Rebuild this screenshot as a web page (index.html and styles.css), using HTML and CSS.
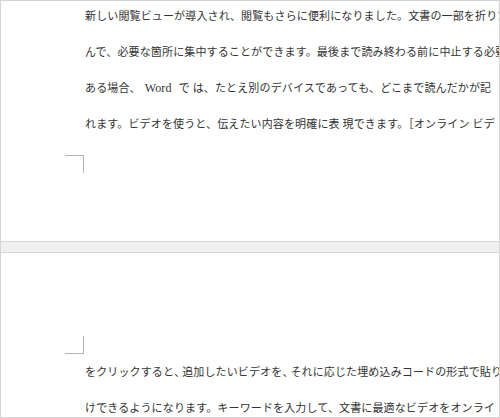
FILE: index.html
```html
<!DOCTYPE html>
<html lang="ja">
<head>
    <meta charset="UTF-8">
    <title>閲覧ビュー</title>
    <link rel="stylesheet" href="styles.css">
</head>
<body>
    <div class="viewer">
        <div class="page page--first">
            <div class="body-text">
                <p class="line">新しい閲覧ビューが導入され、閲覧もさらに便利になりました。文書の一部を折りた</p>
                <p class="line">んで、必要な箇所に集中することができます。最後まで読み終わる前に中止する必要</p>
                <p class="line">ある場合、<span class="latin">Word</span>で は、たとえ別のデバイスであっても、どこまで読んだかが記</p>
                <p class="line">れます。ビデオを使うと、伝えたい内容を明確に表 現できます。［オンライン ビデ</p>
            </div>
            <div class="crop crop--bottom"></div>
        </div>
        <div class="page-gap"></div>
        <div class="page page--second">
            <div class="crop crop--top"></div>
            <div class="body-text">
                <p class="line">をクリックすると<span class="tight">、</span>追加したいビデオを<span class="tight">、</span>それに応じた埋め込みコードの形式で貼り</p>
                <p class="line">けできるようになります。キーワードを入力して、文書に最適なビデオをオンライ</p>
            </div>
        </div>
    </div>
</body>
</html>
```

FILE: styles.css
```css
body {
    margin: 0;
    padding: 0;
    background: #fff;
}

.viewer {
    width: 500px;
    height: 418px;
    box-sizing: border-box;
    border: 1px solid #d4d4d4;
    overflow: hidden;
    background: #fff;
}

.page {
    overflow: hidden;
    background: #fff;
}
.page--first {
    height: 240px;
}
.page--second {
    height: 164px;
}

.page-gap {
    height: 10px;
    background: #f0f0f0;
    border-top: 1px solid #d6d6d6;
    border-bottom: 1px solid #d6d6d6;
}

.body-text {
    padding-left: 84px;
    font-family: "Liberation Serif", "Noto Sans CJK JP", serif;
    font-size: 11px;
    letter-spacing: 0.14px;
    color: #333;
}
.page--first .body-text {
    margin-top: -3px;
}

.line {
    margin: 0;
    height: 36px;
    line-height: 36px;
    white-space: nowrap;
}

/* latin word inside japanese text gets a little air on both sides */
.latin {
    font-size: 12px;
    margin-left: 4px;
    margin-right: 7px;
}

.tight {
    letter-spacing: -3px;
}

/* corner marks of the text area */
.crop {
    width: 18px;
    height: 17px;
    margin-left: 64px;
    border: 0 solid #b4b4b4;
}
.crop--bottom {
    margin-top: 13px;
    border-top-width: 1px;
    border-right-width: 1px;
}
.crop--top {
    margin-top: 83px;
    border-bottom-width: 1px;
    border-right-width: 1px;
}
```
